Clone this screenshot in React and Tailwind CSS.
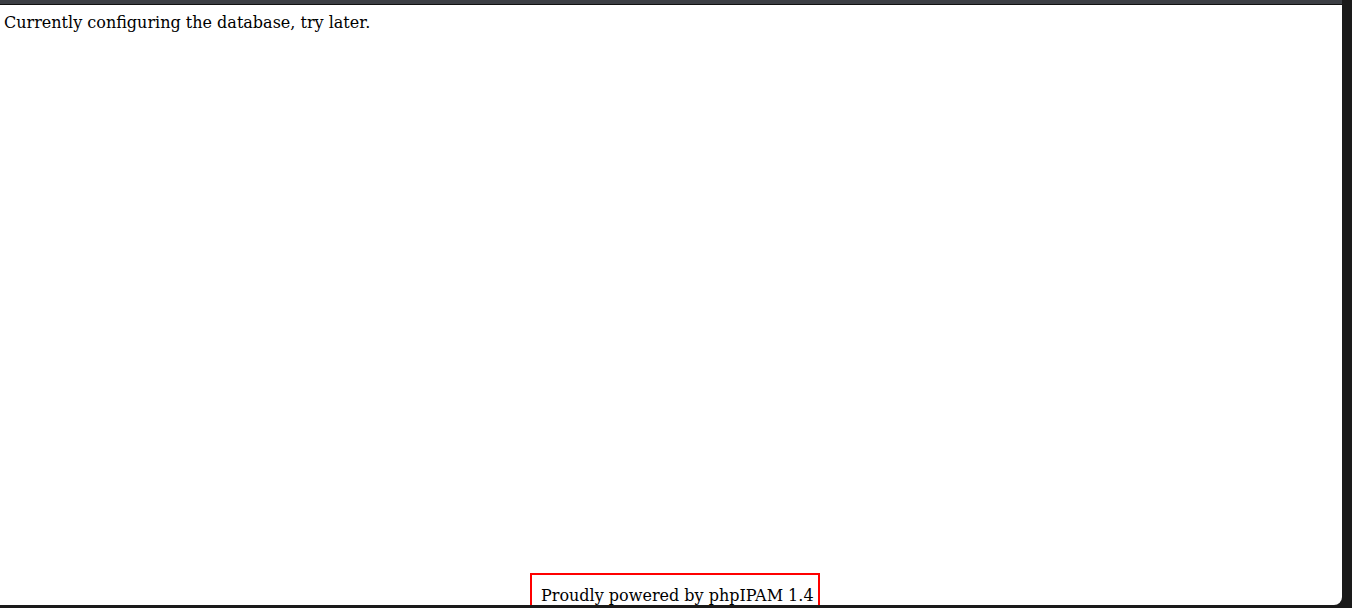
import React from 'react';

const App = () => {
    return (
        <div className="w-[1352px] h-[608px] bg-[#1a1a1a] flex overflow-hidden" style={{fontFamily: '"DejaVu Serif", serif'}}>
            <div className="w-[1342px] h-[605px] flex flex-col">
                <div className="h-[4px] bg-[#3c3f44]"></div>
                <div className="h-[1px] bg-[#111111]"></div>
                <div className="flex-1 bg-white rounded-br-lg overflow-hidden flex flex-col text-black text-base">
                    <div className="pl-1 pt-[6px]">Currently configuring the database, try later.</div>
                    <div className="mt-auto ml-[530px] w-[290px] h-[40px] shrink-0 border-2 border-b-0 border-[#ff0000] pl-[9px] pt-[9px] whitespace-nowrap translate-y-[8px]">
                        Proudly powered by phpIPAM 1.4
                    </div>
                </div>
            </div>
        </div>
    );
};

export default App;
